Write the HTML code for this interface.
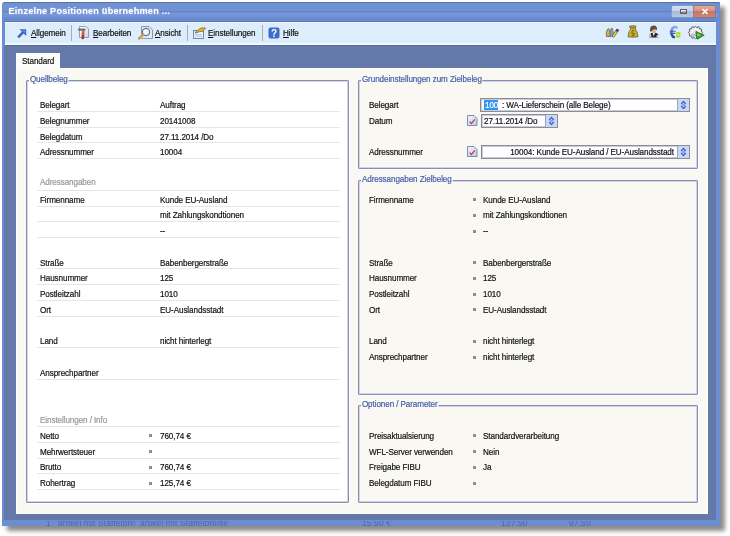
<!DOCTYPE html>
<html><head><meta charset="utf-8">
<style>
*{margin:0;padding:0;box-sizing:border-box}
html,body{width:730px;height:536px;overflow:hidden;background:#fff}
body{filter:blur(.3px)}
body{position:relative;font-family:"Liberation Sans",sans-serif;font-size:9px;letter-spacing:-.1px;color:#111;-webkit-text-stroke-width:.2px}
.a{position:absolute}
svg{position:absolute;overflow:visible}
.t{position:absolute;white-space:nowrap;line-height:10px;transform:scaleX(.9);transform-origin:0 0}
#win{left:2px;top:2px;width:717.5px;height:523.5px;background:#6d8dd2;border-top:1px solid #5671ad;border-radius:3px 1px 0 0;box-shadow:5px 5px 4px rgba(0,0,0,.45)}
#tbar1{left:3px;top:3px;width:715px;height:9px;background:#7091d2;border-radius:2px 0 0 0;border-bottom:1px solid #6282c6}
#tbar2{left:3px;top:12px;width:715px;height:8.5px;background:linear-gradient(#6a8cd4 0,#7596dc 20%,#7394d8 45%,#6587cc 75%,#6c8dd6 100%)}
#title{left:8.5px;top:5.5px;color:#fff;font-weight:bold;font-size:9.2px;letter-spacing:.2px;-webkit-text-stroke-width:0;line-height:11px;transform:none;text-shadow:0 0 2px rgba(255,255,255,.5)}
#tb{left:5px;top:20.5px;width:711px;height:25px;background:linear-gradient(#5a72aa 0,#5a72aa 1px,#f2f9ff 1px,#f2f9ff 2px,#deedfc 2.5px,#dcedfc 22px,#f2f9ff 22.5px,#f2f9ff 23.5px,#566d9f 24px,#566d9f 25px)}
#band{left:4px;top:45.5px;width:712px;height:474.5px;background:#6479a8}
#tab{left:16px;top:53px;width:44px;height:16px;background:#fcfcfa}
#panel{left:16px;top:68px;width:692px;height:446px;background:#f9f8f3;border:1px solid #fdfdfb}
.gb{position:absolute;border:1px solid #8a8cb0;border-radius:1px;box-shadow:inset 0 0 0 1px #d2d3e6,1px 1px 0 #fff}
.gl{position:absolute;color:#4560aa;background:#f9f8f3;padding:0 1px;line-height:10px;white-space:nowrap;transform:scaleX(.9);transform-origin:0 0}
.rl{position:absolute;height:1px;background:#e6e6e6}
.sep{position:absolute;width:1px;background:#a3adc0}
.sq{position:absolute;width:3.5px;height:3.5px;background:#8e8e8e}
.gr{color:#979797}
#bgt{left:4px;top:521px;width:712px;height:4.5px;overflow:hidden}
#bgt .t{color:rgba(35,50,110,.42);font-size:8.5px;letter-spacing:.1px;top:-3.2px;-webkit-text-stroke-width:0;transform:none}
.cb{position:absolute;background:#fff;border:1px solid #8a8e98;box-shadow:inset 0 0 0 1px #c9ccd4}
.sp{position:absolute;background:#c9d8f6;border-left:1px solid #9aa6c0}
</style></head><body>
<div id="win" class="a"></div>
<div id="tbar1" class="a"></div>
<div id="tbar2" class="a"></div>
<div id="title" class="t">Einzelne Positionen übernehmen ...</div>
<div class="a" style="left:672px;top:6.00px;width:21px;height:11px;background:linear-gradient(#d3e0f4 0,#c3d3ee 50%,#a9bad6 50%,#b9c9e2 100%);border-radius:1px;box-shadow:0 0 0 .5px #8fa5cf"></div>
<div class="a" style="left:679.5px;top:9.00px;width:7px;height:5px;border:1px solid #606060;background:#e8e8e8;box-shadow:inset 0 -1.5px 0 #888"></div>
<div class="a" style="left:694px;top:6.00px;width:21px;height:11px;background:linear-gradient(#e2a898 0,#d8907e 50%,#c87664 50%,#d08474 100%);border-radius:1px;box-shadow:0 0 0 .7px #a06a70"></div>
<svg style="left:700px;top:7px" width="10" height="9" viewBox="0 0 10 9"><path d="M2.5 2L7.5 7M7.5 2L2.5 7" stroke="#fff" stroke-width="1.6"/></svg>
<div id="tb" class="a"></div>
<div id="band" class="a"></div>
<div id="bgt" class="a"><div class="t" style="left:42px">1</div><div class="t" style="left:54px;width:78px;overflow:hidden">artikel mit Staffelpreis</div><div class="t" style="left:136px">artikel mit Staffelpreise</div><div class="t" style="left:358px">15,50 €</div><div class="t" style="left:497px">127,50</div><div class="t" style="left:565px">97,50</div></div>
<div id="panel" class="a"></div>
<div id="tab" class="a"></div>
<div class="t" style="left:22px;top:56.00px;">Standard</div>
<svg style="left:17px;top:28px" width="10" height="10" viewBox="0 0 10 10"><path d="M1.8 8.6L6.8 3.6" stroke="#3a5fbf" stroke-width="2.4" stroke-linecap="round"/><path d="M2.6 1.3H9.2V7.9z" fill="#3a5fbf"/><path d="M5 2.2H8.3V5.5z" fill="#6a8ee0"/></svg>
<div class="t" style="left:31px;top:28.00px;"><u>A</u>llgemein</div>
<div class="sep" style="left:71px;top:25.00px;width:1px;height:16px;"></div>
<svg style="left:77px;top:25px" width="13" height="15" viewBox="0 0 13 15"><defs><linearGradient id="dg" x1="0" y1="0" x2="1" y2="1"><stop offset=".3" stop-color="#fbfcff"/><stop offset="1" stop-color="#c4d0f0"/></linearGradient><linearGradient id="hg" x1="0" y1="0" x2="0" y2="1"><stop offset="0" stop-color="#f07848"/><stop offset="1" stop-color="#9a2810"/></linearGradient></defs><path d="M2.5 1.5H9L11.5 4V12.5H2.5z" fill="url(#dg)" stroke="#8494b4" stroke-width=".9"/><path d="M4.8 5.2H7.6L7.4 11.5Q7.3 14.2 5.8 14.2Q4.3 14.2 4.5 11.5z" fill="url(#hg)"/><rect x="1" y="3.4" width="7.6" height="2.4" rx="1" fill="#6a707a"/></svg>
<div class="t" style="left:93px;top:28.00px;"><u>B</u>earbeiten</div>
<svg style="left:137px;top:25px" width="17" height="15" viewBox="0 0 17 15"><path d="M4.5 1.5H12L15.5 5V13.5H4.5z" fill="#e6ecf7" stroke="#8a98b4" stroke-width="1"/><circle cx="9" cy="7" r="3.6" fill="#f4f7fc" stroke="#6d7890" stroke-width="1.3"/><path d="M6.3 9.8L2 13.5" stroke="#c99a50" stroke-width="2.4" stroke-linecap="round"/></svg>
<div class="t" style="left:155px;top:28.00px;"><u>A</u>nsicht</div>
<div class="sep" style="left:187px;top:25.00px;width:1px;height:16px;"></div>
<svg style="left:192px;top:25px" width="15" height="15" viewBox="0 0 15 15"><rect x="1.5" y="5.5" width="10" height="8" fill="#e8eefa" stroke="#6f86b6" stroke-width="1"/><rect x="3" y="9" width="7" height="3" fill="#c8d6f0"/><path d="M3 7.5L8 3.5Q11 2 13.5 3.2L11 6.2Q7 6.2 4 8.2z" fill="#e5b820" stroke="#7a5a20" stroke-width=".7"/></svg>
<div class="t" style="left:208px;top:28.00px;"><u>E</u>instellungen</div>
<div class="sep" style="left:262px;top:25.00px;width:1px;height:16px;"></div>
<svg style="left:268px;top:27px" width="12" height="12" viewBox="0 0 12 12"><rect x=".5" y=".5" width="11" height="11" rx="2" fill="#3c6bc8"/><text x="6" y="9.6" font-family="Liberation Sans" font-weight="bold" font-size="10" fill="#fff" text-anchor="middle">?</text></svg>
<div class="t" style="left:283px;top:28.00px;"><u>H</u>ilfe</div>
<svg style="left:603px;top:24px" width="18" height="16" viewBox="0 0 18 16"><path d="M3.5 12.4Q2.6 8 4.6 5.2Q5.4 4 6 5.2Q7.8 8 7.2 12.4z" fill="#e4ae3c" stroke="#5e5a3c" stroke-width=".8"/><path d="M7 12.3Q6.6 7 8.2 4.4Q8.8 3.6 9.4 4.4Q10.6 7 10.2 12.3z" fill="#74a2c8" stroke="#4a6478" stroke-width=".6"/><path d="M10.4 12L13.8 7" stroke="#5a5a30" stroke-width="3" stroke-linecap="round"/><path d="M10.4 12L13.8 7" stroke="#d8d050" stroke-width="1.8" stroke-linecap="round"/><circle cx="14.3" cy="6.3" r="1.5" fill="#7a3048"/></svg>
<svg style="left:624px;top:23px" width="18" height="17" viewBox="0 0 18 17"><path d="M5.5 3.2Q8.8 2.2 12 3.2L11.2 5.8Q13.6 8.5 14 13.8Q9 14.6 4 13.8Q4.4 8.5 6.6 5.8z" fill="#c4ae3a" stroke="#6e5e1a" stroke-width=".8"/><path d="M5.8 3.6Q8.8 4.6 11.8 3.6L11 5.6Q8.8 6.2 6.7 5.6z" fill="#8a8a30"/><path d="M10 7.6Q7.8 7.2 7.8 9Q8 10.4 9.6 10.6Q10.8 11 9.8 12.2Q8.8 12.8 7.8 12.2" stroke="#6a5a18" stroke-width="1.3" fill="none" opacity=".8"/><path d="M6 9Q6.5 7 7.5 6.5" stroke="#e8d870" stroke-width=".8" fill="none"/></svg>
<svg style="left:645px;top:23px" width="18" height="17" viewBox="0 0 18 17"><path d="M4 14.6Q3.8 9.8 8.8 9.6Q13.8 9.8 13.9 14.6z" fill="#262626"/><path d="M7.6 9.8L8.8 13.4L10 9.8z" fill="#f0f0f0"/><path d="M4.2 11.2Q3.6 13.2 4.3 14.5L6.6 14.5L5.8 10.6z" fill="#c8c8c8"/><path d="M11.6 12.2H14V14.5H11.6z" fill="#e0e0e0"/><ellipse cx="9" cy="8" rx="2" ry="2.1" fill="#dcb890"/><path d="M5 8.6Q4.4 2.6 8.6 2.6Q12.6 2.6 12 7.4Q11.2 6 9.2 6.4Q7.4 6.2 6.6 8.6z" fill="#58504a"/></svg>
<svg style="left:666px;top:23px" width="18" height="17" viewBox="0 0 18 17"><defs><linearGradient id="eg" x1="0" y1="0" x2="0" y2="1"><stop offset="0" stop-color="#8aaee8"/><stop offset="1" stop-color="#1a3a96"/></linearGradient></defs><path d="M11.4 5Q10.2 3.8 8.8 4Q5.6 4.4 5.4 9.2Q5.6 14 8.8 14.2" stroke="url(#eg)" stroke-width="2.4" fill="none"/><path d="M3.8 8.2H9.6M3.8 10.4H9.2" stroke="#3a5cb8" stroke-width="1.1"/><path d="M9.6 9.4Q12.4 8.6 14.6 9.4Q13.6 11.6 14.8 14Q12.2 15.2 9.6 14.2Q11 11.8 9.6 9.4z" fill="#a8d830"/><circle cx="12.3" cy="11.8" r="1.2" fill="#d0ec6a"/></svg>
<svg style="left:687px;top:23px" width="20" height="18" viewBox="0 0 20 18"><path d="M8.5 3.3L10 4.6L11.9 3.6L12.5 5.8L14.6 6.1L14.2 8.2L15.8 9.5L14.2 10.8L14.6 12.9L12.5 13.2L11.9 15.4L10 14.4L8.5 15.7L7 14.4L5.1 15.4L4.5 13.2L2.4 12.9L2.8 10.8L1.2 9.5L2.8 8.2L2.4 6.1L4.5 5.8L5.1 3.6L7 4.6z" fill="#eef0f2" stroke="#5c6066" stroke-width="1"/><circle cx="8.5" cy="9.5" r="2.2" fill="#dde0e4"/><circle cx="6" cy="12.5" r="2" fill="#a8a8d0" opacity=".7"/><path d="M9 8.4L17.2 12.2L10 16.2Q8.4 12.5 9 8.4z" fill="#3c9a2c" stroke="#1e6414" stroke-width=".7"/><path d="M10 10.2L14.6 12.2L10.4 13.6z" fill="#84d060"/></svg>
<div class="gb" style="left:26px;top:80.00px;width:323px;height:423px;background:#fff"></div>
<div class="gl" style="left:29px;top:74px">Quellbeleg</div>
<div class="t" style="left:39.5px;top:100.00px;">Belegart</div>
<div class="t" style="left:160px;top:100.00px;">Auftrag</div>
<div class="rl" style="left:37px;top:111.00px;width:303px;height:1px;"></div>
<div class="t" style="left:39.5px;top:115.75px;">Belegnummer</div>
<div class="t" style="left:160px;top:115.75px;">20141008</div>
<div class="rl" style="left:37px;top:127.00px;width:303px;height:1px;"></div>
<div class="t" style="left:39.5px;top:131.50px;">Belegdatum</div>
<div class="t" style="left:160px;top:131.50px;">27.11.2014 /Do</div>
<div class="rl" style="left:37px;top:142.00px;width:303px;height:1px;"></div>
<div class="t" style="left:39.5px;top:147.25px;">Adressnummer</div>
<div class="t" style="left:160px;top:147.25px;">10004</div>
<div class="rl" style="left:37px;top:158.00px;width:303px;height:1px;"></div>
<div class="t" style="left:39.5px;top:178.75px;"><span class="gr" style="position:relative;top:-1.75px">Adressangaben</span></div>
<div class="rl" style="left:37px;top:190.00px;width:303px;height:1px;"></div>
<div class="t" style="left:39.5px;top:194.50px;">Firmenname</div>
<div class="t" style="left:160px;top:194.50px;">Kunde EU-Ausland</div>
<div class="rl" style="left:37px;top:206.00px;width:303px;height:1px;"></div>
<div class="t" style="left:160px;top:210.25px;">mit Zahlungskondtionen</div>
<div class="rl" style="left:37px;top:221.00px;width:303px;height:1px;"></div>
<div class="t" style="left:160px;top:226.00px;">--</div>
<div class="rl" style="left:37px;top:237.00px;width:303px;height:1px;"></div>
<div class="t" style="left:39.5px;top:257.50px;">Straße</div>
<div class="t" style="left:160px;top:257.50px;">Babenbergerstraße</div>
<div class="rl" style="left:37px;top:268.00px;width:303px;height:1px;"></div>
<div class="t" style="left:39.5px;top:273.25px;">Hausnummer</div>
<div class="t" style="left:160px;top:273.25px;">125</div>
<div class="rl" style="left:37px;top:284.00px;width:303px;height:1px;"></div>
<div class="t" style="left:39.5px;top:289.00px;">Postleitzahl</div>
<div class="t" style="left:160px;top:289.00px;">1010</div>
<div class="rl" style="left:37px;top:300.00px;width:303px;height:1px;"></div>
<div class="t" style="left:39.5px;top:304.75px;">Ort</div>
<div class="t" style="left:160px;top:304.75px;">EU-Auslandsstadt</div>
<div class="rl" style="left:37px;top:316.00px;width:303px;height:1px;"></div>
<div class="t" style="left:39.5px;top:336.25px;">Land</div>
<div class="t" style="left:160px;top:336.25px;">nicht hinterlegt</div>
<div class="rl" style="left:37px;top:347.00px;width:303px;height:1px;"></div>
<div class="t" style="left:39.5px;top:367.75px;">Ansprechpartner</div>
<div class="rl" style="left:37px;top:379.00px;width:303px;height:1px;"></div>
<div class="t" style="left:39.5px;top:415.00px;"><span class="gr">Einstellungen / Info</span></div>
<div class="rl" style="left:37px;top:426.00px;width:303px;height:1px;"></div>
<div class="t" style="left:39.5px;top:430.75px;">Netto</div>
<div class="sq" style="left:149px;top:434.25px;width:3px;height:3px;"></div>
<div class="t" style="left:160px;top:430.75px;">760,74 €</div>
<div class="rl" style="left:37px;top:442.00px;width:303px;height:1px;"></div>
<div class="t" style="left:39.5px;top:446.50px;">Mehrwertsteuer</div>
<div class="sq" style="left:149px;top:450.00px;width:3px;height:3px;"></div>
<div class="rl" style="left:37px;top:458.00px;width:303px;height:1px;"></div>
<div class="t" style="left:39.5px;top:462.25px;">Brutto</div>
<div class="sq" style="left:149px;top:465.75px;width:3px;height:3px;"></div>
<div class="t" style="left:160px;top:462.25px;">760,74 €</div>
<div class="rl" style="left:37px;top:473.00px;width:303px;height:1px;"></div>
<div class="t" style="left:39.5px;top:478.00px;">Rohertrag</div>
<div class="sq" style="left:149px;top:481.50px;width:3px;height:3px;"></div>
<div class="t" style="left:160px;top:478.00px;">125,74 €</div>
<div class="rl" style="left:37px;top:489.00px;width:303px;height:1px;"></div>
<div class="gb" style="left:358px;top:80.00px;width:340px;height:89px;"></div>
<div class="gl" style="left:361px;top:74px">Grundeinstellungen zum Zielbeleg</div>
<div class="t" style="left:369px;top:100.00px;">Belegart</div>
<div class="t" style="left:369px;top:115.75px;">Datum</div>
<div class="t" style="left:369px;top:147.25px;">Adressnummer</div>
<div class="cb" style="left:480px;top:97.50px;width:210px;height:14.5px;"></div>
<div class="a" style="left:484px;top:100.00px;width:14px;height:9.5px;background:#3394f0"></div>
<div class="t" style="left:485px;top:100.20px;color:#fff;letter-spacing:-.1px;font-size:9px">100</div>
<div class="t" style="left:502px;top:100.20px;">: WA-Lieferschein (alle Belege)</div>
<div class="sp" style="left:677px;top:98.50px;width:12px;height:12.5px;"></div>
<svg style="left:680px;top:100px" width="7" height="10" viewBox="0 0 7 10"><path d="M1.2 4L3.5 1.5L5.8 4M1.2 6L3.5 8.5L5.8 6" stroke="#3f63c4" stroke-width="1.3" fill="none"/><path d="M2.2 5H4.8" stroke="#3f63c4" stroke-width="1"/></svg>
<div class="cb" style="left:481px;top:114.00px;width:77px;height:14px;"></div>
<div class="t" style="left:484px;top:116.00px;">27.11.2014 /Do</div>
<div class="sp" style="left:545px;top:115.00px;width:12px;height:12px;"></div>
<svg style="left:548px;top:116px" width="7" height="10" viewBox="0 0 7 10"><path d="M1.2 4L3.5 1.5L5.8 4M1.2 6L3.5 8.5L5.8 6" stroke="#3f63c4" stroke-width="1.3" fill="none"/><path d="M2.2 5H4.8" stroke="#3f63c4" stroke-width="1"/></svg>
<svg style="left:467px;top:115px" width="11" height="12" viewBox="0 0 11 12"><defs><linearGradient id="cg" x1="0" y1="0" x2="1" y2="1"><stop offset="0" stop-color="#f4f7fd"/><stop offset="1" stop-color="#b9c8ea"/></linearGradient></defs><path d="M.5 .5H7L10 3.5V10.5H.5z" fill="url(#cg)" stroke="#7c8cb4" stroke-width="1"/><path d="M2.6 6.6L4.3 8.6L7.8 4.4" stroke="#c43040" stroke-width="1.15" fill="none"/></svg>
<div class="cb" style="left:481px;top:145.00px;width:209px;height:13.5px;"></div>
<div class="t" style="right:56px;top:147.25px;transform-origin:100% 0">10004: Kunde EU-Ausland / EU-Auslandsstadt</div>
<div class="sp" style="left:677px;top:146.00px;width:12px;height:11.5px;"></div>
<svg style="left:680px;top:147px" width="7" height="10" viewBox="0 0 7 10"><path d="M1.2 4L3.5 1.5L5.8 4M1.2 6L3.5 8.5L5.8 6" stroke="#3f63c4" stroke-width="1.3" fill="none"/><path d="M2.2 5H4.8" stroke="#3f63c4" stroke-width="1"/></svg>
<svg style="left:467px;top:146px" width="11" height="12" viewBox="0 0 11 12"><defs><linearGradient id="cg" x1="0" y1="0" x2="1" y2="1"><stop offset="0" stop-color="#f4f7fd"/><stop offset="1" stop-color="#b9c8ea"/></linearGradient></defs><path d="M.5 .5H7L10 3.5V10.5H.5z" fill="url(#cg)" stroke="#7c8cb4" stroke-width="1"/><path d="M2.6 6.6L4.3 8.6L7.8 4.4" stroke="#c43040" stroke-width="1.15" fill="none"/></svg>
<div class="gb" style="left:358px;top:180.00px;width:340px;height:215px;"></div>
<div class="gl" style="left:361px;top:174px">Adressangaben Zielbeleg</div>
<div class="t" style="left:369px;top:194.50px;">Firmenname</div>
<div class="sq" style="left:473px;top:198.00px;width:3px;height:3px;"></div>
<div class="t" style="left:483px;top:194.50px;">Kunde EU-Ausland</div>
<div class="sq" style="left:473px;top:213.75px;width:3px;height:3px;"></div>
<div class="t" style="left:483px;top:210.25px;">mit Zahlungskondtionen</div>
<div class="sq" style="left:473px;top:229.50px;width:3px;height:3px;"></div>
<div class="t" style="left:483px;top:226.00px;">--</div>
<div class="t" style="left:369px;top:257.50px;">Straße</div>
<div class="sq" style="left:473px;top:261.00px;width:3px;height:3px;"></div>
<div class="t" style="left:483px;top:257.50px;">Babenbergerstraße</div>
<div class="t" style="left:369px;top:273.25px;">Hausnummer</div>
<div class="sq" style="left:473px;top:276.75px;width:3px;height:3px;"></div>
<div class="t" style="left:483px;top:273.25px;">125</div>
<div class="t" style="left:369px;top:289.00px;">Postleitzahl</div>
<div class="sq" style="left:473px;top:292.50px;width:3px;height:3px;"></div>
<div class="t" style="left:483px;top:289.00px;">1010</div>
<div class="t" style="left:369px;top:304.75px;">Ort</div>
<div class="sq" style="left:473px;top:308.25px;width:3px;height:3px;"></div>
<div class="t" style="left:483px;top:304.75px;">EU-Auslandsstadt</div>
<div class="t" style="left:369px;top:336.25px;">Land</div>
<div class="sq" style="left:473px;top:339.75px;width:3px;height:3px;"></div>
<div class="t" style="left:483px;top:336.25px;">nicht hinterlegt</div>
<div class="t" style="left:369px;top:352.00px;">Ansprechpartner</div>
<div class="sq" style="left:473px;top:355.50px;width:3px;height:3px;"></div>
<div class="t" style="left:483px;top:352.00px;">nicht hinterlegt</div>
<div class="gb" style="left:358px;top:405.00px;width:340px;height:98px;"></div>
<div class="gl" style="left:361px;top:399px">Optionen / Parameter</div>
<div class="t" style="left:369px;top:430.75px;">Preisaktualsierung</div>
<div class="sq" style="left:473px;top:434.25px;width:3px;height:3px;"></div>
<div class="t" style="left:483px;top:430.75px;">Standardverarbeitung</div>
<div class="t" style="left:369px;top:446.50px;">WFL-Server verwenden</div>
<div class="sq" style="left:473px;top:450.00px;width:3px;height:3px;"></div>
<div class="t" style="left:483px;top:446.50px;">Nein</div>
<div class="t" style="left:369px;top:462.25px;">Freigabe FIBU</div>
<div class="sq" style="left:473px;top:465.75px;width:3px;height:3px;"></div>
<div class="t" style="left:483px;top:462.25px;">Ja</div>
<div class="t" style="left:369px;top:478.00px;">Belegdatum FIBU</div>
<div class="sq" style="left:473px;top:481.50px;width:3px;height:3px;"></div>
</body></html>
